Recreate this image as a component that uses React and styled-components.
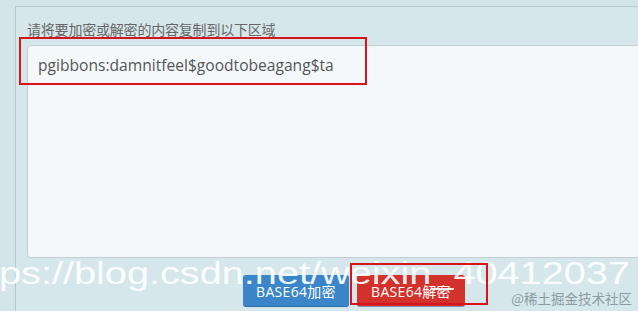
import React from "react";
import styled, { createGlobalStyle } from "styled-components";

const Global = createGlobalStyle`
  html, body { margin: 0; padding: 0; }
  body {
    width: 638px;
    height: 311px;
    overflow: hidden;
    background: #d4e5e9;
    font-family: "Open Sans", "Noto Sans CJK SC", sans-serif;
  }
`;

const Page = styled.div`
  position: relative;
  width: 638px;
  height: 311px;
  overflow: hidden;
  padding: 6px 0 0 15px;
  box-sizing: border-box;
`;

const Panel = styled.div`
  display: flex;
  flex-direction: column;
  align-items: flex-start;
  border-top: 1px solid #b7c8cc;
  border-left: 1px solid #b7c8cc;
  background: #d6e7eb;
  padding: 12px 0 0 11px;
  width: 700px;
  height: 400px;
  box-sizing: border-box;
`;

const Label = styled.div`
  font-family: "Noto Sans CJK SC", sans-serif;
  font-size: 14px;
  line-height: 20px;
  letter-spacing: -0.2px;
  color: #666;
  height: 26px;
`;

const TextArea = styled.div`
  width: 660px;
  height: 213px;
  box-sizing: border-box;
  border: 1px solid #c3ced2;
  border-radius: 4px;
  background: #f4f8fb;
  padding: 8px 10px 8px 10px;
  font-family: "Open Sans", sans-serif;
  font-size: 15.6px;
  line-height: 22px;
  color: #555;
`;

const ButtonRow = styled.div`
  display: flex;
  gap: 8px;
  margin-top: 17px;
  padding-left: 216px;
`;

const Button = styled.div`
  width: ${(p) => p.$w}px;
  height: 32px;
  border-radius: 3px;
  background: ${(p) => p.$bg};
  border-bottom: 1px solid ${(p) => p.$edge};
  box-sizing: border-box;
  color: #fff;
  font-family: "Open Sans", "Noto Sans CJK SC", sans-serif;
  font-size: 14px;
  letter-spacing: 0.3px;
  display: flex;
  align-items: center;
  justify-content: center;
`;

const Highlight = styled.div`
  position: absolute;
  left: ${(p) => p.$x}px;
  top: ${(p) => p.$y}px;
  width: ${(p) => p.$w}px;
  height: ${(p) => p.$h}px;
  border: 2px solid #d8141b;
  box-sizing: border-box;
  pointer-events: none;
`;

const Watermark = styled.div`
  position: absolute;
  left: -1px;
  top: 254px;
  font-family: "Liberation Sans", Arial, sans-serif;
  font-size: 31px;
  line-height: 40px;
  color: rgba(255, 255, 255, 0.92);
  white-space: nowrap;
  transform: scaleX(1.28);
  transform-origin: left top;
  pointer-events: none;
`;

const Credit = styled.div`
  position: absolute;
  right: 6px;
  top: 289px;
  font-family: "Noto Sans CJK SC", sans-serif;
  font-size: 13.5px;
  line-height: 18px;
  color: #8d9ca1;
  white-space: nowrap;
`;

export default function App() {
  return (
    <>
      <Global />
      <Page>
        <Panel>
          <Label>请将要加密或解密的内容复制到以下区域</Label>
          <TextArea>pgibbons:damnitfeel$goodtobeagang$ta</TextArea>
          <ButtonRow>
            <Button $w={106} $bg="#3a86c8" $edge="#2f6fa8">BASE64加密</Button>
            <Button $w={108} $bg="#d2312c" $edge="#7d8fb8">BASE64解密</Button>
          </ButtonRow>
        </Panel>
        <Highlight $x={19} $y={37} $w={348} $h={48} />
        <Watermark>ps://blog.csdn.net/weixin_40412037</Watermark>
        <Highlight $x={350} $y={263} $w={138} $h={42} />
        <Credit>@稀土掘金技术社区</Credit>
      </Page>
    </>
  );
}
